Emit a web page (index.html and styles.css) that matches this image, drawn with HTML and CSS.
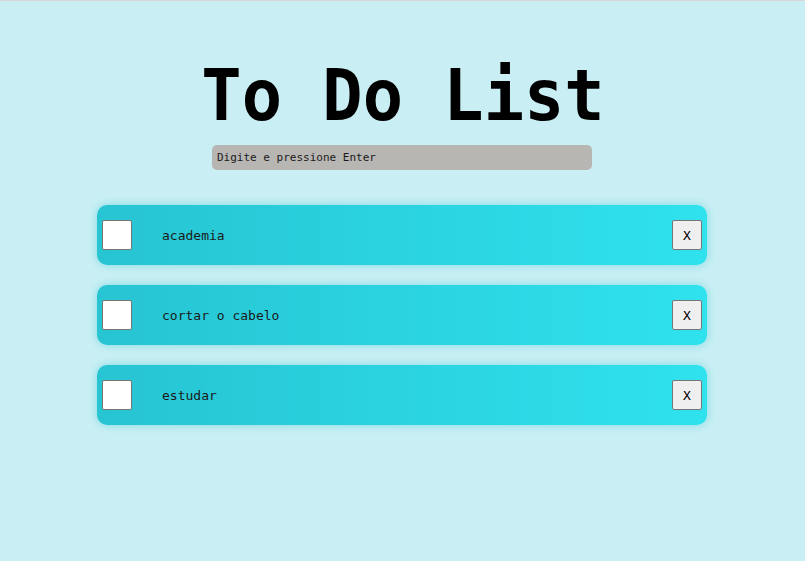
FILE: index.html
```html
<!DOCTYPE html>
<html lang="pt">
<head>
<meta charset="utf-8">
<title>To Do List</title>
<link rel="stylesheet" href="styles.css">
</head>
<body>
<main class="app">
  <h1 class="title">To Do List</h1>
  <input class="new-task" type="text" placeholder="Digite e pressione Enter">
  <ul class="tasks">
    <li class="task">
      <input class="check" type="checkbox">
      <span class="label">academia</span>
      <button class="remove">X</button>
    </li>
    <li class="task">
      <input class="check" type="checkbox">
      <span class="label">cortar o cabelo</span>
      <button class="remove">X</button>
    </li>
    <li class="task">
      <input class="check" type="checkbox">
      <span class="label">estudar</span>
      <button class="remove">X</button>
    </li>
  </ul>
</main>
</body>
</html>
```
FILE: styles.css
```css
html, body {
  margin: 0;
  padding: 0;
}
body {
  background: #c9eff4;
  border-top: 1px solid #d6d6d6;
  min-height: 560px;
  font-family: "DejaVu Sans Mono", "Liberation Mono", monospace;
}
.app {
  display: flex;
  flex-direction: column;
  align-items: center;
  padding-top: 52px;
  padding-right: 1px;
}
.title {
  margin: 0;
  font-size: 67px;
  font-weight: bold;
  letter-spacing: 0;
  line-height: 84px;
  color: #000;
  transform: translateX(1px) scaleY(1.07);
}
.new-task {
  margin-top: 8px;
  width: 380px;
  height: 25px;
  box-sizing: border-box;
  border: none;
  border-radius: 5px;
  background: #b8b6b3;
  padding: 0 5px;
  font-family: "DejaVu Sans Mono", monospace;
  font-size: 11px;
  color: #000;
  outline: none;
}
.new-task::placeholder {
  color: #1a1a1a;
}
.tasks {
  list-style: none;
  margin: 35px 0 0;
  padding: 0;
  width: 610px;
  display: flex;
  flex-direction: column;
  gap: 20px;
}
.task {
  height: 60px;
  border-radius: 10px;
  background: linear-gradient(to right, #27c4d2, #2fe2ee);
  box-shadow: 0 0 8px rgba(38, 196, 210, 0.45);
  display: flex;
  align-items: center;
  padding: 0 5px;
}
.check {
  appearance: none;
  -webkit-appearance: none;
  margin: 0;
  width: 30px;
  height: 30px;
  background: #fff;
  border: 1px solid #767676;
  border-radius: 2px;
  box-sizing: border-box;
}
.label {
  flex: 1;
  margin-left: 30px;
  font-size: 13px;
  color: #1a1a1a;
}
.remove {
  width: 30px;
  height: 30px;
  box-sizing: border-box;
  background: #efefef;
  border: 1px solid #767676;
  border-radius: 2px;
  padding: 0;
  font-family: "DejaVu Sans Mono", monospace;
  font-size: 13px;
  color: #000;
}
```
